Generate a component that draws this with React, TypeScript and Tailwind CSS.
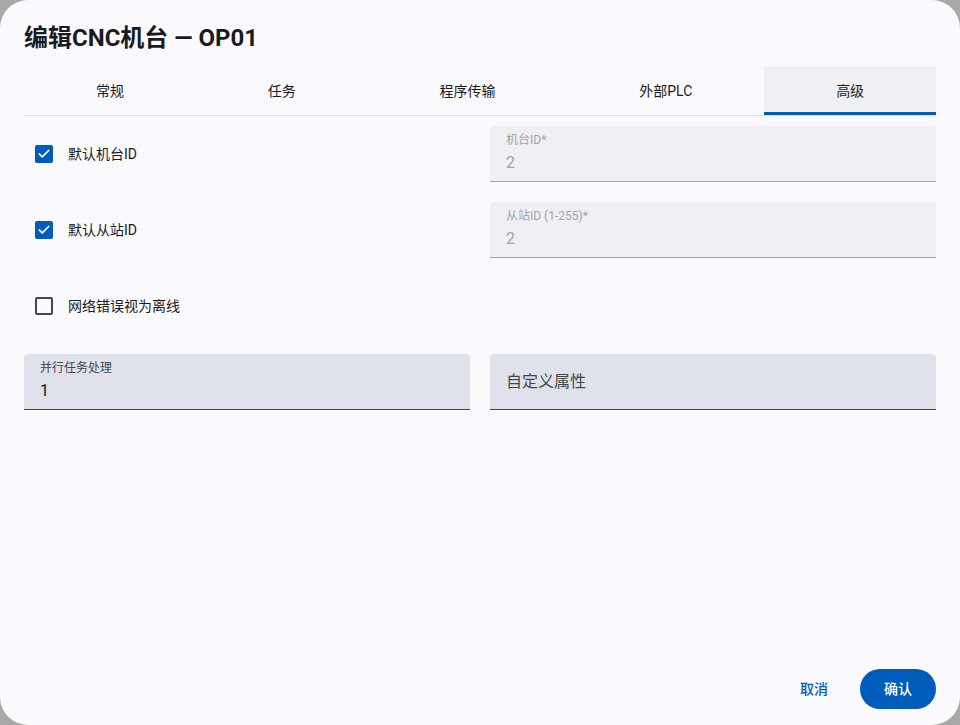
import { Check } from 'lucide-react';

const tabs = ['常规', '任务', '程序传输', '外部PLC', '高级'];

function CheckRow({ label, checked }: { label: string; checked: boolean }) {
  return (
    <div className="flex h-14 items-center pl-[11px]">
      <div
        className={
          checked
            ? 'flex h-[18px] w-[18px] items-center justify-center rounded-[2px] bg-[#005cbb]'
            : 'h-[18px] w-[18px] rounded-[2px] border-2 border-[#44474e]'
        }
      >
        {checked && <Check className="h-[14px] w-[14px] text-white" strokeWidth={3} />}
      </div>
      <span className="ml-[15px] text-sm text-[#1a1b21]">{label}</span>
    </div>
  );
}

function DisabledField({ label, value }: { label: string; value: string }) {
  return (
    <div className="flex h-14 flex-col rounded-t border-b border-[#a7a7ad] bg-[#f0f0f4] px-4 pt-[6px]">
      <span className="text-xs text-[#a3a3a8]">{label}</span>
      <span className="mt-[3px] text-base text-[#a3a3a8]">{value}</span>
    </div>
  );
}

export default function App() {
  return (
    <div className="h-[725px] w-[960px] bg-[#a8a8a8] font-['Roboto','Noto_Sans_CJK_SC',sans-serif]">
      <div className="flex h-full w-full flex-col rounded-[28px] bg-[#f9f9fe] px-6">
        <h1 className="pt-[22px] text-2xl leading-8 font-bold text-[#1a1b21]">编辑CNC机台 — OP01</h1>

        <div className="mt-[13px] flex border-b border-[#e0e0e4]">
          {tabs.map((t, i) => (
            <div
              key={t}
              className={
                i === 4
                  ? 'flex h-12 flex-auto items-center justify-center border-b-[3px] border-[#005cbb] bg-[#efeff4] pt-[3px] text-sm text-[#1a1b21]'
                  : 'flex h-12 flex-auto items-center justify-center text-sm text-[#1a1b21]'
              }
            >
              {t}
            </div>
          ))}
        </div>

        <div className="mt-[10px] grid grid-cols-2 gap-x-5 gap-y-5">
          <CheckRow label="默认机台ID" checked />
          <DisabledField label="机台ID*" value="2" />
          <CheckRow label="默认从站ID" checked />
          <DisabledField label="从站ID (1-255)*" value="2" />
          <CheckRow label="网络错误视为离线" checked={false} />
          <div />
          <div className="flex h-14 flex-col rounded-t border-b border-[#44474e] bg-[#dfe2ea] px-4 pt-[6px]">
            <span className="text-xs text-[#44474e]">并行任务处理</span>
            <span className="mt-[3px] text-base text-[#1a1b21]">1</span>
          </div>
          <div className="flex h-14 items-center rounded-t border-b border-[#44474e] bg-[#dfe2ea] px-4">
            <span className="text-base text-[#44474e]">自定义属性</span>
          </div>
        </div>

        <div className="mt-auto mb-4 flex items-center justify-end gap-2">
          <button className="h-10 w-[76px] text-sm font-medium text-[#005cbb]">取消</button>
          <button className="h-10 w-[76px] rounded-full bg-[#005cbb] text-sm font-medium text-white">确认</button>
        </div>
      </div>
    </div>
  );
}
